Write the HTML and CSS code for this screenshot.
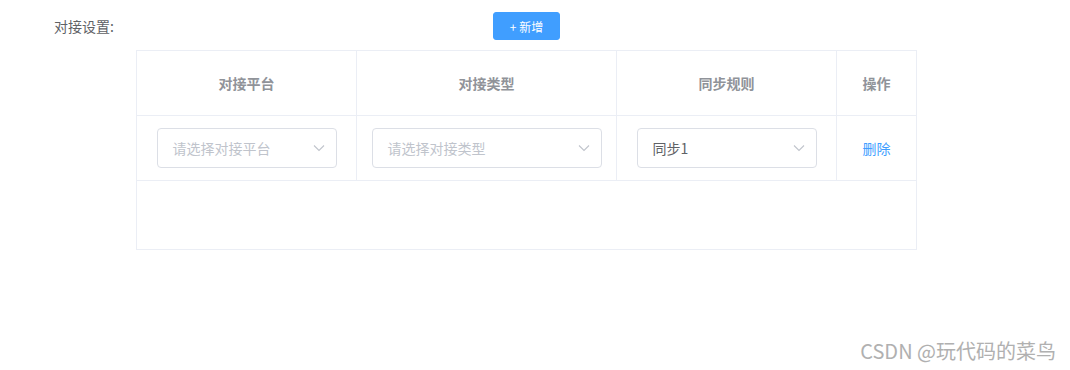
FILE: index.html
```html
<!DOCTYPE html>
<html lang="zh-CN">
<head>
    <meta charset="UTF-8">
    <meta name="viewport" content="width=device-width, initial-scale=1.0">
    <title>对接设置</title>
    <link rel="stylesheet" href="styles.css">
</head>
<body>
    <div class="form-item">
        <div class="form-top">
            <label class="form-label">对接设置:</label>
            <button type="button" class="btn-add">+ 新增</button>
        </div>
        <div class="table">
            <div class="tr thead">
                <div class="td c1">对接平台</div>
                <div class="td c2">对接类型</div>
                <div class="td c3">同步规则</div>
                <div class="td c4">操作</div>
            </div>
            <div class="tr">
                <div class="td c1">
                    <div class="select w180">
                        <span class="placeholder">请选择对接平台</span>
                        <svg class="arrow" viewBox="0 0 12 8" width="12" height="8"><path d="M1 1.5 L6 6.5 L11 1.5" fill="none" stroke="#c0c4cc" stroke-width="1.1"/></svg>
                    </div>
                </div>
                <div class="td c2">
                    <div class="select w230">
                        <span class="placeholder">请选择对接类型</span>
                        <svg class="arrow" viewBox="0 0 12 8" width="12" height="8"><path d="M1 1.5 L6 6.5 L11 1.5" fill="none" stroke="#c0c4cc" stroke-width="1.1"/></svg>
                    </div>
                </div>
                <div class="td c3">
                    <div class="select w180">
                        <span class="value">同步1</span>
                        <svg class="arrow" viewBox="0 0 12 8" width="12" height="8"><path d="M1 1.5 L6 6.5 L11 1.5" fill="none" stroke="#c0c4cc" stroke-width="1.1"/></svg>
                    </div>
                </div>
                <div class="td c4">
                    <a class="link-del">删除</a>
                </div>
            </div>
            <div class="table-empty"></div>
        </div>
    </div>
    <div class="watermark">CSDN @玩代码的菜鸟</div>
</body>
</html>
```

FILE: styles.css
```css
body{
    margin: 0;
    font-family: "Noto Sans CJK SC", "Liberation Sans", sans-serif;
    background: #fff;
    color: #606266;
}
.form-top{
    display: flex;
    align-items: center;
    padding-top: 12px;
    height: 28px;
}
.form-label{
    flex-shrink: 0;
    width: 136px;
    padding-left: 54px;
    box-sizing: border-box;
    white-space: nowrap;
    font-size: 14px;
    color: #606266;
    line-height: 28px;
}
.btn-add{
    margin-left: 357px;
    width: 67px;
    height: 28px;
    padding: 0;
    border: 1px solid #409eff;
    border-radius: 3px;
    background-color: #409eff;
    color: #fff;
    font-family: inherit;
    font-size: 12px;
    cursor: pointer;
}
.table{
    margin: 10px 0 0 136px;
    width: 781px;
    border: 1px solid #ebeef5;
    box-sizing: border-box;
}
.tr{
    display: flex;
    height: 64px;
    border-bottom: 1px solid #ebeef5;
}
.td{
    display: flex;
    align-items: center;
    justify-content: center;
    flex-shrink: 0;
    box-sizing: border-box;
    border-right: 1px solid #ebeef5;
    font-size: 14px;
}
.thead .td{
    color: #909399;
    font-weight: bold;
}
.c1{ width: 220px; }
.c2{ width: 260px; }
.c3{ width: 220px; }
.c4{ width: 79px; border-right: none; }
.select{
    display: flex;
    align-items: center;
    justify-content: space-between;
    height: 40px;
    padding: 0 11px 0 15px;
    border: 1px solid #dcdfe6;
    border-radius: 4px;
    box-sizing: border-box;
    font-size: 14px;
}
.w180{ width: 180px; }
.w230{ width: 230px; }
.placeholder{
    color: #c0c4cc;
}
.value{
    color: #606266;
}
.arrow{
    display: block;
}
.link-del{
    color: #409eff;
    cursor: pointer;
}
.table-empty{
    height: 68px;
}
.watermark{
    position: absolute;
    right: 14px;
    top: 336px;
    font-size: 20px;
    color: #a8a8a8;
    opacity: 0.9;
}
```
